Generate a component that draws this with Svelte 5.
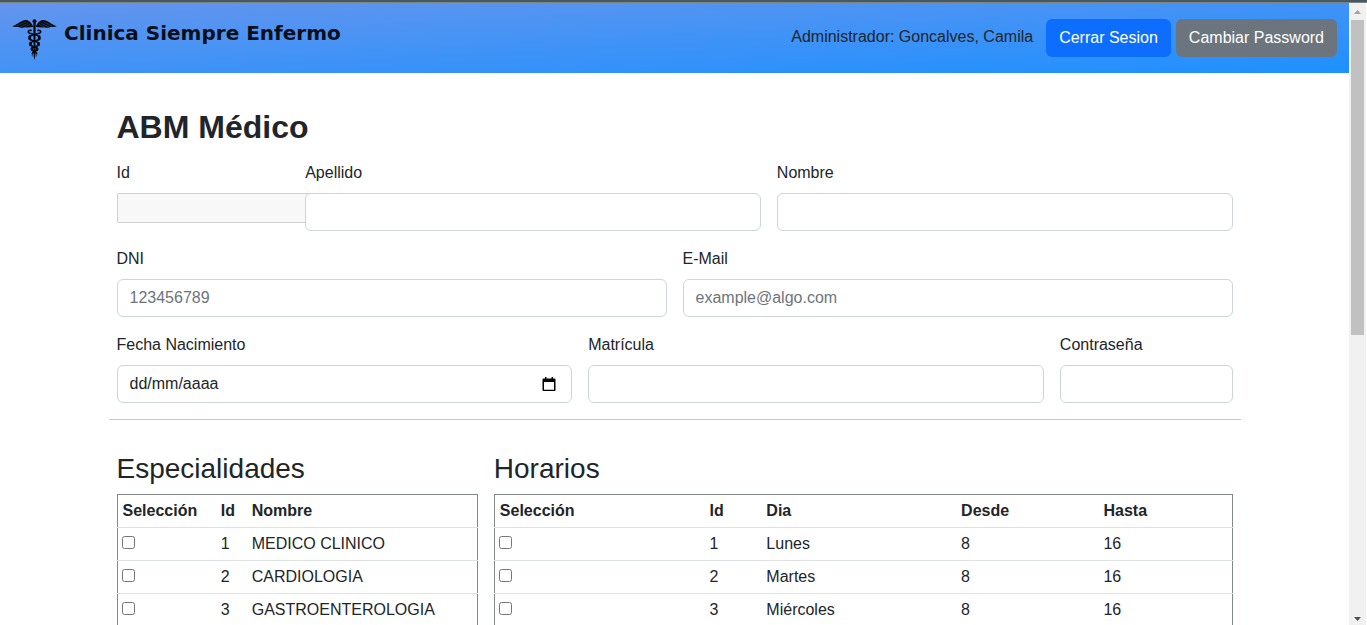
<script>
  const especialidades = [
    { id: 1, nombre: 'MEDICO CLINICO' },
    { id: 2, nombre: 'CARDIOLOGIA' },
    { id: 3, nombre: 'GASTROENTEROLOGIA' }
  ];

  const horarios = [
    { id: 1, dia: 'Lunes', desde: 8, hasta: 16 },
    { id: 2, dia: 'Martes', desde: 8, hasta: 16 },
    { id: 3, dia: 'Miércoles', desde: 8, hasta: 16 }
  ];
</script>

<div class="window">
  <div class="edge"></div>
  <div class="view">
    <div class="page">
      <header>
        <a class="brand" href="#inicio">
          <svg class="logo" viewBox="0 0 45 41" aria-hidden="true">
            <g fill="#05080d">
              <path d="M21 7C19 3.500 17 1 13.500 1 9 1.500 5 6 .3 7.200 2 8 4 8 6 7.800 8 9 10.500 9 12.500 8.200 15 9 18.500 8.300 21 8Z" />
              <path d="M24 7C26 3.500 28 1 31.500 1 36 1.500 40 6 44.700 7.200 43 8 41 8 39 7.800 37 9 34.500 9 32.500 8.200 30 9 26.500 8.300 24 8Z" />
              <circle cx="22.500" cy="2.200" r="2" />
              <path d="M21.300 4H23.700L23.300 37 22.500 41 21.700 37Z" />
            </g>
            <g fill="none" stroke="#05080d" stroke-linecap="round">
              <path stroke-width="1.700" d="M19 11.300C16 11 15.500 13.500 17.500 14.300 20 15.300 27.800 15.500 27.800 19 27.800 22.500 18 21.500 18 25 18 28 25.500 27.500 25.500 30 25.500 32.500 20.500 32 20.500 34.500" />
              <path stroke-width="1.700" d="M26 11.300C29 11 29.500 13.500 27.500 14.300 25 15.300 17.200 15.500 17.200 19 17.200 22.500 27 21.500 27 25 27 28 19.500 27.500 19.500 30 19.500 32.500 24.500 32 24.500 34.500" />
              <path stroke-width="2.600" d="M17.800 17.600V20M27.200 17.600V20M18.600 24V26M26.400 24V26M20 29.500V30.500M25 29.500V30.500" />
              <path stroke-width="1" d="M20.300 34.500V37M24.700 34.500V37" opacity=".5" />
            </g>
            <path d="M5 6.900 14 2.800M8 7.700 16 4.300M13 7.700 18 5.500M40 6.900 31 2.800M37 7.700 29 4.300M32 7.700 27 5.500" stroke="#5a94f0" stroke-width=".5" opacity=".6" />
          </svg>
          <span>Clinica Siempre Enfermo</span>
        </a>
        <div class="session">
          <span class="user">Administrador: Goncalves, Camila</span>
          <button class="btn primary" type="button">Cerrar Sesion</button>
          <button class="btn secondary" type="button">Cambiar Password</button>
        </div>
      </header>

      <main>
        <h1>ABM Médico</h1>
        <form>
          <div class="row">
            <div class="col-2">
              <label for="id">Id</label>
              <input class="plain" id="id" type="text" disabled />
            </div>
            <div class="col-5">
              <label for="apellido">Apellido</label>
              <input class="control" id="apellido" type="text" />
            </div>
            <div class="col-5">
              <label for="nombre">Nombre</label>
              <input class="control" id="nombre" type="text" />
            </div>
          </div>
          <div class="row">
            <div class="col-6">
              <label for="dni">DNI</label>
              <input class="control" id="dni" type="text" placeholder="123456789" />
            </div>
            <div class="col-6">
              <label for="email">E-Mail</label>
              <input class="control" id="email" type="email" placeholder="example@algo.com" />
            </div>
          </div>
          <div class="row">
            <div class="col-5">
              <label for="fecha">Fecha Nacimiento</label>
              <div class="control date">
                <input id="fecha" type="text" placeholder="dd/mm/aaaa" />
                <button type="button" aria-label="Abrir calendario">
                  <svg viewBox="0 0 14 15" aria-hidden="true">
                    <path fill="#000" fill-rule="evenodd" d="M3 0H4.500V1.500H9.500V0H11V1.500H12.500Q13.500 1.500 13.500 2.500V13Q13.500 14 12.500 14H1.500Q.5 14 .5 13V2.500Q.5 1.500 1.500 1.500H3ZM2 5V12.800H12V5Z" />
                  </svg>
                </button>
              </div>
            </div>
            <div class="col-5">
              <label for="matricula">Matrícula</label>
              <input class="control" id="matricula" type="text" />
            </div>
            <div class="col-2">
              <label for="clave">Contraseña</label>
              <input class="control" id="clave" type="password" />
            </div>
          </div>
        </form>
        <hr />
        <div class="row">
          <section class="col-4">
            <h3>Especialidades</h3>
            <table>
              <colgroup>
                <col style="width: 27.4%" /><col style="width: 8.6%" /><col />
              </colgroup>
              <thead>
                <tr><th>Selección</th><th>Id</th><th>Nombre</th></tr>
              </thead>
              <tbody>
                {#each especialidades as e}
                  <tr>
                    <td><input type="checkbox" aria-label={e.nombre} /></td>
                    <td>{e.id}</td>
                    <td>{e.nombre}</td>
                  </tr>
                {/each}
              </tbody>
            </table>
          </section>
          <section class="col-8">
            <h3>Horarios</h3>
            <table>
              <colgroup>
                <col style="width: 28.5%" /><col style="width: 7.7%" /><col style="width: 26.4%" /><col style="width: 19.3%" /><col />
              </colgroup>
              <thead>
                <tr><th>Selección</th><th>Id</th><th>Dia</th><th>Desde</th><th>Hasta</th></tr>
              </thead>
              <tbody>
                {#each horarios as h}
                  <tr>
                    <td><input type="checkbox" aria-label={h.dia} /></td>
                    <td>{h.id}</td>
                    <td>{h.dia}</td>
                    <td>{h.desde}</td>
                    <td>{h.hasta}</td>
                  </tr>
                {/each}
              </tbody>
            </table>
          </section>
        </div>
      </main>
    </div>
    <div class="scrollbar" aria-hidden="true">
      <svg class="arrow" viewBox="0 0 17 17"><path fill="#a3a3a3" d="M5 11 8.500 7 12 11Z" /></svg>
      <div class="track"><div class="thumb"></div></div>
      <svg class="arrow" viewBox="0 0 17 17"><path fill="#505050" d="M5 9 8.500 13 12 9Z" /></svg>
    </div>
  </div>
</div>

<style>
  :global(body) {
    margin: 0;
    background: #fff;
  }

  .window,
  .window * {
    box-sizing: border-box;
  }

  .window {
    display: flex;
    flex-direction: column;
    height: 100vh;
    overflow: hidden;
    color: #212529;
    font: 16px/24px "Liberation Sans", Arial, sans-serif;
  }

  .edge {
    flex: none;
    height: 3px;
    background: #455a64;
    border-bottom: 1px solid #7b8584;
  }

  .view {
    display: flex;
    flex: 1;
    min-height: 0;
    padding-right: 1px;
  }

  .page {
    flex: 1;
    min-width: 0;
    overflow: hidden;
  }

  header {
    display: flex;
    align-items: flex-start;
    justify-content: space-between;
    height: 70px;
    padding: 16px 12px;
    background: linear-gradient(to bottom right, cornflowerblue, dodgerblue);
  }

  .brand {
    display: flex;
    gap: 7px;
    color: #0b0f19;
    font: bold 20px/28px "DejaVu Sans", Verdana, sans-serif;
    text-decoration: none;
  }

  .logo {
    width: 45px;
    height: 41px;
  }

  .session {
    display: flex;
    gap: 5px;
  }

  .user {
    padding: 6px 8px 0 0;
  }

  .btn {
    height: 38px;
    padding: 0 13px;
    border: 0;
    border-radius: 6px;
    color: #fff;
    font: inherit;
  }

  .primary {
    background: #0d6efd;
  }

  .secondary {
    background: #6c757d;
  }

  main {
    max-width: 1132px;
    margin: 0 auto;
    padding-top: 35px;
  }

  h1 {
    margin: 0 8px 15px;
    font-size: 32px;
    line-height: 38px;
  }

  .row {
    display: grid;
    grid-template-columns: repeat(12, minmax(0, 1fr));
    margin-bottom: 16px;
  }

  .row > * {
    padding: 0 8px;
  }

  .col-2 {
    grid-column: span 2;
  }

  .col-4 {
    grid-column: span 4;
  }

  .col-5 {
    grid-column: span 5;
  }

  .col-6 {
    grid-column: span 6;
  }

  .col-8 {
    grid-column: span 8;
  }

  label {
    display: block;
    margin-bottom: 8px;
  }

  .control {
    position: relative;
    display: block;
    width: 100%;
    height: 38px;
    padding: 0 12px;
    border: 1px solid #ced4da;
    border-radius: 6px;
    background: #fff;
    color: #212529;
    font: inherit;
  }

  .control::placeholder {
    color: #6c757d;
    opacity: 1;
  }

  .plain {
    display: block;
    width: calc(100% + 24px);
    height: 30px;
    border: 1px solid #d0d0d0;
    border-radius: 2px;
    background: #f8f8f8;
  }

  .date {
    display: flex;
    align-items: center;
    justify-content: space-between;
    padding-right: 15px;
  }

  .date input {
    flex: 1;
    min-width: 0;
    padding: 0;
    border: 0;
    background: none;
    color: #212529;
    font: inherit;
  }

  .date input::placeholder {
    color: #212529;
    opacity: 1;
  }

  .date button {
    display: flex;
    padding: 0;
    border: 0;
    background: none;
  }

  .date svg {
    width: 14px;
    height: 15px;
  }

  hr {
    height: 1px;
    margin: 0 0 32px;
    border: 0;
    background: #c8c9ca;
  }

  h3 {
    margin: 0 0 8px;
    font-size: 28px;
    font-weight: 400;
    line-height: 34px;
  }

  table {
    width: 100%;
    border: 1px solid #85888b;
    border-collapse: collapse;
    table-layout: fixed;
  }

  th,
  td {
    height: 33px;
    padding: 4px 5px;
    border-bottom: 1px solid #dee2e6;
    line-height: 24px;
    text-align: left;
    white-space: nowrap;
  }

  td input {
    display: block;
    width: 13px;
    height: 13px;
    margin: 0 0 4px -1px;
  }

  .scrollbar {
    display: flex;
    flex: none;
    flex-direction: column;
    width: 17px;
    background: #f1f1f1;
  }

  .arrow {
    flex: none;
    width: 17px;
    height: 17px;
  }

  .track {
    flex: 1;
    padding: 0 2px;
  }

  .thumb {
    height: 53.5%;
    background: #c1c1c1;
  }
</style>
